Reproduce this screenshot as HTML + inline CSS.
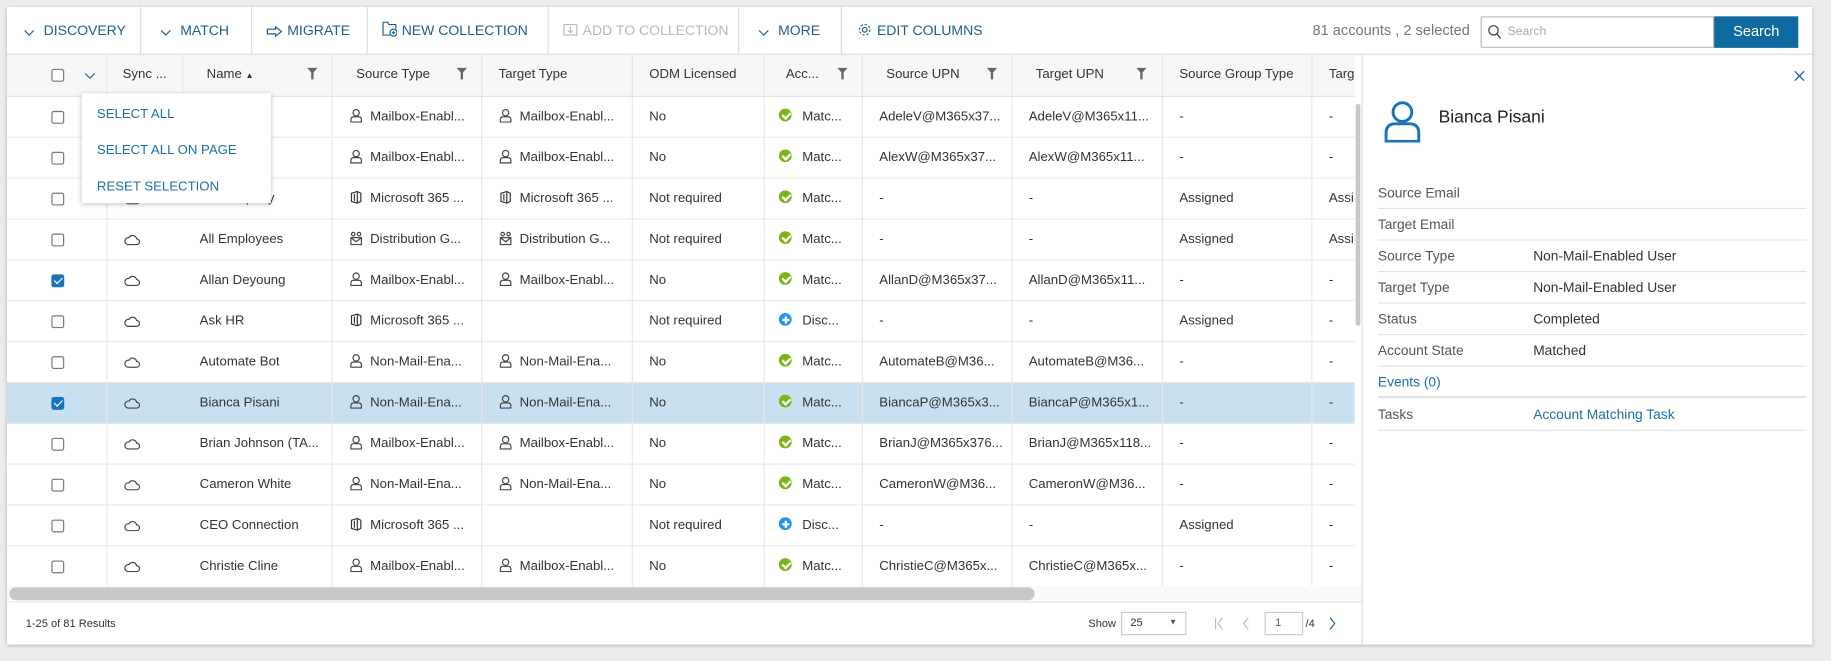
<!DOCTYPE html>
<html><head><meta charset="utf-8"><style>
*{box-sizing:border-box;margin:0;padding:0}
html,body{width:1831px;height:661px;overflow:hidden;background:#ececec}
#s{position:absolute;left:0;top:0;width:1568px;height:566px;transform:scale(1.1677);transform-origin:0 0;font-family:"Liberation Sans",sans-serif;font-size:11.3px;color:#333}
.card{position:absolute;left:6px;top:6px;width:1546px;height:546px;background:#fff;box-shadow:0 1px 3px rgba(0,0,0,.25)}
.tb{position:absolute;left:0;top:0;width:1546px;height:41px;border-bottom:1px solid #ddd}
.btn{position:absolute;top:0;height:40px;line-height:41px;color:#1d5f8a;font-size:12px;border-right:1px solid #ddd;padding-left:14px;white-space:nowrap}
.btn.dis{color:#b9b9b9}
.btn svg{vertical-align:-2px;margin-right:4px}
.a{position:absolute;white-space:nowrap}
.hdr{position:absolute;left:0;top:41px;width:1154px;height:36px;background:#f7f7f7;border-bottom:1px solid #e3e3e3}
.col{position:absolute;top:0;height:100%;border-right:1px solid #e6e6e6}
.row{position:absolute;left:0;width:1154px;height:35px;border-bottom:1px solid #e8e8e8}
.row.sel{background:#c8e1f2}
.c{position:absolute;top:0;line-height:35px;white-space:nowrap;overflow:hidden}
.cb{position:absolute;width:11px;height:11px;border:1px solid #777;border-radius:2px;background:#fff}
.cb.on{background:#1a73b8;border-color:#1a73b8}
.cb.on:after{content:"";position:absolute;left:3px;top:0px;width:3px;height:6px;border:solid #fff;border-width:0 1.5px 1.5px 0;transform:rotate(45deg)}
.ok{display:inline-block;width:11px;height:11px;border-radius:50%;background:#7cb518;vertical-align:-1px;margin-right:9px;position:relative}
.ok:after{content:"";position:absolute;left:3.5px;top:1.5px;width:3px;height:5px;border:solid #fff;border-width:0 2px 2px 0;transform:rotate(45deg)}
.pl{display:inline-block;width:11px;height:11px;border-radius:50%;background:#2196f3;vertical-align:-1px;margin-right:9px;position:relative}
.pl:before{content:"";position:absolute;left:2.5px;top:4.5px;width:6px;height:2px;background:#fff}
.pl:after{content:"";position:absolute;left:4.5px;top:2.5px;width:2px;height:6px;background:#fff}
.ic{display:inline-block;width:12px;height:12px;margin-right:6px;vertical-align:-2px}
.pr{position:absolute;left:1174px;height:27px;width:367px;border-bottom:1px solid #e3e3e3;line-height:26px;color:#555;font-size:11.8px}
.pr b{font-weight:normal;position:absolute;left:133px;color:#333}
.f{position:absolute;top:11px}
</style></head><body><div id="s">
<div class="card">
<div class="tb">
<div class="btn" style="left:0;width:115px"><svg width="10" height="8"><path d="M1 2l4 4 4-4" fill="none" stroke="#1d5f8a"/></svg> DISCOVERY</div>
<div class="btn" style="left:115px;width:95px;padding-left:16px"><svg width="10" height="8"><path d="M1 2l4 4 4-4" fill="none" stroke="#1d5f8a"/></svg> MATCH</div>
<div class="btn" style="left:210px;width:99px;padding-left:12px"><svg width="14" height="10"><path d="M1 3h7V1l5 4-5 4V7H1z" fill="none" stroke="#1d5f8a"/></svg>MIGRATE</div>
<div class="btn" style="left:309px;width:155px;padding-left:12px"><svg width="13" height="14"><path d="M1 1h4l1 2h6v4M1 1v11h6" fill="none" stroke="#1d5f8a"/><circle cx="10" cy="10" r="3" fill="none" stroke="#1d5f8a"/><path d="M10 8.5v3M8.5 10h3" stroke="#1d5f8a"/></svg>NEW COLLECTION</div>
<div class="btn dis" style="left:464px;width:163px;padding-left:12px"><svg width="13" height="14"><path d="M1 3h11v9H1z" fill="none" stroke="#bbb"/><path d="M6.5 5v5M4.5 8l2 2 2-2" fill="none" stroke="#bbb"/></svg>ADD TO COLLECTION</div>
<div class="btn" style="left:627px;width:88px;padding-left:16px"><svg width="10" height="8"><path d="M1 2l4 4 4-4" fill="none" stroke="#1d5f8a"/></svg> MORE</div>
<div class="btn" style="left:715px;width:130px;border:none;padding-left:13px"><svg width="13" height="13" viewBox="0 0 13 13"><circle cx="6.5" cy="6.5" r="2" fill="none" stroke="#1d5f8a"/><circle cx="6.5" cy="6.5" r="4.5" fill="none" stroke="#1d5f8a" stroke-dasharray="2 1.5"/></svg>EDIT COLUMNS</div>
<div class="a" style="left:1118px;top:13px;color:#777;font-size:12.5px">81 accounts , 2 selected</div>
<div class="a" style="left:1262px;top:8px;width:200px;height:27px;border:1px solid #bbb;color:#aaa;font-size:10.5px;line-height:25px;padding-left:22px">Search<svg style="position:absolute;left:5px;top:6px" width="12" height="13"><circle cx="5" cy="5" r="4" fill="none" stroke="#333"/><path d="M8 8l3 4" stroke="#333"/></svg></div>
<div class="a" style="left:1462px;top:8px;width:72px;height:27px;background:#0f6a9f;color:#fff;font-size:12.5px;line-height:27px;text-align:center">Search</div>
</div>
<div class="hdr">
<div class="col" style="left:0;width:86px"><span class="cb" style="left:38px;top:12px"></span><svg class="a" style="left:66px;top:14px" width="10" height="8"><path d="M1 2l4 4 4-4" fill="none" stroke="#1d5f8a"/></svg></div>
<div class="col" style="left:86px;width:65px"><span class="a" style="left:13px;top:11px">Sync ...</span></div>
<div class="col" style="left:151px;width:128px"><span class="a" style="left:20px;top:11px">Name <span style="font-size:7px">&#9650;</span></span><svg class="f" style="left:106px" width="9" height="11"><path d="M0 0h9L5.5 4v6h-2V4z" fill="#666"/></svg></div>
<div class="col" style="left:279px;width:128px"><span class="a" style="left:20px;top:11px">Source Type</span><svg class="f" style="left:106px" width="9" height="11"><path d="M0 0h9L5.5 4v6h-2V4z" fill="#666"/></svg></div>
<div class="col" style="left:407px;width:129px"><span class="a" style="left:14px;top:11px">Target Type</span></div>
<div class="col" style="left:536px;width:113px"><span class="a" style="left:14px;top:11px">ODM Licensed</span></div>
<div class="col" style="left:649px;width:84px"><span class="a" style="left:18px;top:11px">Acc...</span><svg class="f" style="left:62px" width="9" height="11"><path d="M0 0h9L5.5 4v6h-2V4z" fill="#666"/></svg></div>
<div class="col" style="left:733px;width:128px"><span class="a" style="left:20px;top:11px">Source UPN</span><svg class="f" style="left:106px" width="9" height="11"><path d="M0 0h9L5.5 4v6h-2V4z" fill="#666"/></svg></div>
<div class="col" style="left:861px;width:129px"><span class="a" style="left:20px;top:11px">Target UPN</span><svg class="f" style="left:106px" width="9" height="11"><path d="M0 0h9L5.5 4v6h-2V4z" fill="#666"/></svg></div>
<div class="col" style="left:990px;width:128px"><span class="a" style="left:14px;top:11px">Source Group Type</span></div>
<div class="col" style="left:1118px;width:40px;border:none;overflow:hidden"><span class="a" style="left:14px;top:11px">Targ</span></div>
</div>
<div id="rows"></div>
<div class="a" style="left:1154px;top:78px;width:6px;height:420px;background:#fff"><div style="position:absolute;left:1px;top:5px;width:4px;height:190px;background:#c8c8c8;border-radius:2px"></div></div>
<div class="a" style="left:0;top:496px;width:1160px;height:12px;background:#fafafa"><div style="position:absolute;left:2px;top:1px;width:878px;height:11px;background:#c8c8c8;border-radius:6px"></div></div>
<div class="a" style="left:0;top:509px;width:1161px;height:1px;background:#e3e3e3"></div>
<div class="a" style="left:16px;top:523px;font-size:9.5px">1-25 of 81 Results</div>
<div class="a" style="left:926px;top:523px;font-size:9.5px">Show</div>
<div class="a" style="left:954px;top:518px;width:56px;height:20px;border:1px solid #ccc;font-size:9.5px;line-height:18px;padding-left:7px">25<span style="position:absolute;right:7px;font-size:7px;color:#555">&#9660;</span></div>
<svg class="a" style="left:1034px;top:522px" width="40" height="12"><path d="M1 1v10M7 1L3 6l4 5M29 1l-4 5 4 5" fill="none" stroke="#bbb"/></svg>
<div class="a" style="left:1077px;top:518px;width:33px;height:20px;border:1px solid #ccc;font-size:9.5px;line-height:18px;padding-left:8px;color:#555">1</div>
<div class="a" style="left:1112px;top:523px;font-size:9.5px">/4</div>
<svg class="a" style="left:1131px;top:522px" width="8" height="12"><path d="M2 1l4 5-4 5" fill="none" stroke="#1d5f8a"/></svg>
<div class="a" style="left:1160px;top:41px;width:1px;height:505px;background:#ddd"></div>
<svg class="a" style="left:1530px;top:54px" width="10" height="10"><path d="M1 1l8 8M9 1l-8 8" stroke="#1d6fa8" stroke-width="1.2"/></svg>
<svg class="a" style="left:1178px;top:80px" width="34" height="36" viewBox="0 0 34 36"><circle cx="17" cy="10" r="8" fill="none" stroke="#1a73b8" stroke-width="2.5"/><path d="M3 35V28Q3 20 11 20H23Q31 20 31 28V35Z" fill="none" stroke="#1a73b8" stroke-width="2.5"/></svg>
<div class="a" style="left:1226px;top:86px;font-size:15px;color:#222">Bianca Pisani</div>
<div class="pr" style="top:146px">Source Email</div>
<div class="pr" style="top:173px">Target Email</div>
<div class="pr" style="top:200px">Source Type<b>Non-Mail-Enabled User</b></div>
<div class="pr" style="top:227px">Target Type<b>Non-Mail-Enabled User</b></div>
<div class="pr" style="top:254px">Status<b>Completed</b></div>
<div class="pr" style="top:281px">Account State<b>Matched</b></div>
<div class="pr" style="top:308px;color:#1d6fa8;border-bottom:2px solid #e3e3e3">Events (0)</div>
<div class="pr" style="top:336px">Tasks<b style="color:#1d6fa8">Account Matching Task</b></div>
<div class="a" style="left:64px;top:74px;width:162px;height:94px;background:#fff;box-shadow:0 1px 4px rgba(0,0,0,.25);color:#1d6fa8;font-size:11.3px;z-index:5">
<div class="a" style="left:13px;top:12px">SELECT ALL</div>
<div class="a" style="left:13px;top:43px">SELECT ALL ON PAGE</div>
<div class="a" style="left:13px;top:74px">RESET SELECTION</div>
</div>
</div>
</div>
<script>
var P='<svg class="ic" viewBox="0 0 12 12"><circle cx="6" cy="3.5" r="2.7" fill="none" stroke="#444"/><path d="M1.5 11.5V9.5Q1.5 7 4 7h4q2.5 0 2.5 2.5v2z" fill="none" stroke="#444"/></svg>';
var M='<svg class="ic" viewBox="0 0 12 12"><path d="M2 2.5L7 1l3 1.5v7L7 11 2 9.5z" fill="none" stroke="#333"/><path d="M4.5 3v6M7 1.5v9" stroke="#333"/></svg>';
var D='<svg class="ic" viewBox="0 0 12 12"><circle cx="3.5" cy="2.5" r="1.5" fill="none" stroke="#444"/><circle cx="8.5" cy="2.5" r="1.5" fill="none" stroke="#444"/><rect x="1.5" y="5.5" width="9" height="6" fill="none" stroke="#444"/><path d="M1.5 5.5l4.5 3.5 4.5-3.5" fill="none" stroke="#444"/></svg>';
var CL='<svg width="14" height="10" viewBox="0 0 14 10"><path d="M3.5 9.5h7.5a2.5 2.5 0 000-5 3.5 3.5 0 00-6.5-1A3 3 0 003.5 9.5z" fill="none" stroke="#444"/></svg>';
var R=[
["","",P+"Mailbox-Enabl...",P+"Mailbox-Enabl...","No",1,"AdeleV@M365x37...","AdeleV@M365x11...","-","-"],
["","",P+"Mailbox-Enabl...",P+"Mailbox-Enabl...","No",1,"AlexW@M365x37...","AlexW@M365x11...","-","-"],
["","All Company",M+"Microsoft 365 ...",M+"Microsoft 365 ...","Not required",1,"-","-","Assigned","Assig"],
["","All Employees",D+"Distribution G...",D+"Distribution G...","Not required",1,"-","-","Assigned","Assig"],
["on","Allan Deyoung",P+"Mailbox-Enabl...",P+"Mailbox-Enabl...","No",1,"AllanD@M365x37...","AllanD@M365x11...","-","-"],
["","Ask HR",M+"Microsoft 365 ...","","Not required",0,"-","-","Assigned","-"],
["","Automate Bot",P+"Non-Mail-Ena...",P+"Non-Mail-Ena...","No",1,"AutomateB@M36...","AutomateB@M36...","-","-"],
["on","Bianca Pisani",P+"Non-Mail-Ena...",P+"Non-Mail-Ena...","No",1,"BiancaP@M365x3...","BiancaP@M365x1...","-","-"],
["","Brian Johnson (TA...",P+"Mailbox-Enabl...",P+"Mailbox-Enabl...","No",1,"BrianJ@M365x376...","BrianJ@M365x118...","-","-"],
["","Cameron White",P+"Non-Mail-Ena...",P+"Non-Mail-Ena...","No",1,"CameronW@M36...","CameronW@M36...","-","-"],
["","CEO Connection",M+"Microsoft 365 ...","","Not required",0,"-","-","Assigned","-"],
["","Christie Cline",P+"Mailbox-Enabl...",P+"Mailbox-Enabl...","No",1,"ChristieC@M365x...","ChristieC@M365x...","-","-"]];
var L=[151,279,407,536,649,733,861,990,1118,1154],h='';
R.forEach(function(r,i){var sel=i==7;h+='<div class="row'+(sel?' sel':'')+'" style="top:'+(77+i*35)+'px">';
h+='<span class="cb '+(r[0]?'on':'')+'" style="left:38px;top:12px"></span>';
h+='<span class="a" style="left:100px;top:12px">'+CL+'</span>';
var v=[r[1],r[2],r[3],r[4],r[5]?'<span class="ok"></span>Matc...':'<span class="pl"></span>Disc...',r[6],r[7],r[8],r[9]];
for(var k=0;k<9;k++){h+='<div class="col" style="left:'+L[k]+'px;width:'+(L[k+1]-L[k])+'px;'+(k==8?'border:none;overflow:hidden':'border-color:#e8e8e8')+'"><span class="c" style="left:'+(k==4?12:14)+'px;'+(k==8?'':'max-width:'+(L[k+1]-L[k]-18)+'px')+'">'+v[k]+'</span></div>';}
h+='<div class="col" style="left:0;width:86px;border-color:#e8e8e8"></div></div>';});
document.getElementById('rows').innerHTML=h;
</script>
</div></body></html>
